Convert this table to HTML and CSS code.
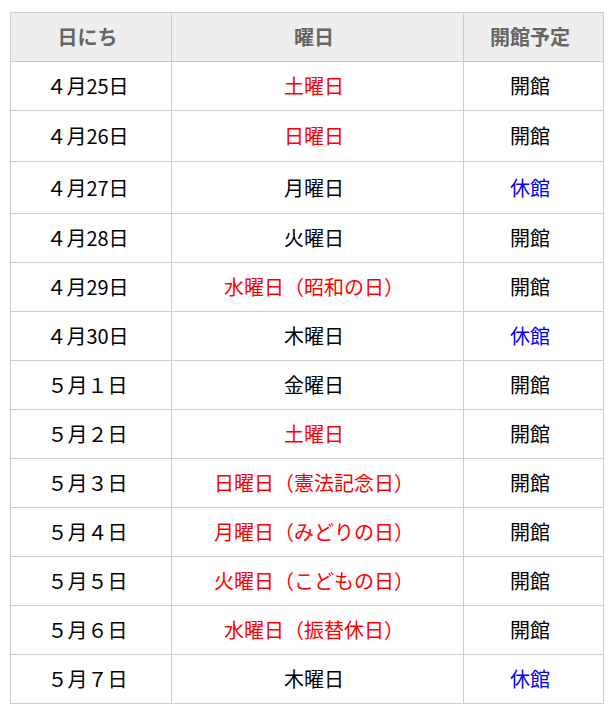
FILE: index.html
```
<!DOCTYPE html>
<html lang="ja">
<head>
<meta charset="utf-8">
<link rel="stylesheet" href="styles.css">
</head>
<body>
<table class="schedule">
  <colgroup>
    <col class="c-date">
    <col class="c-day">
    <col class="c-open">
  </colgroup>
  <thead>
    <tr><th>日にち</th><th>曜日</th><th>開館予定</th></tr>
  </thead>
  <tbody>
    <tr><td>４月25日</td><td class="red">土曜日</td><td>開館</td></tr>
    <tr class="h51"><td>４月26日</td><td class="red">日曜日</td><td>開館</td></tr>
    <tr class="h52"><td>４月27日</td><td>月曜日</td><td class="blue">休館</td></tr>
    <tr><td>４月28日</td><td>火曜日</td><td>開館</td></tr>
    <tr><td>４月29日</td><td class="red">水曜日（昭和の日）</td><td>開館</td></tr>
    <tr><td>４月30日</td><td>木曜日</td><td class="blue">休館</td></tr>
    <tr><td>５月１日</td><td>金曜日</td><td>開館</td></tr>
    <tr><td>５月２日</td><td class="red">土曜日</td><td>開館</td></tr>
    <tr><td>５月３日</td><td class="red">日曜日（憲法記念日）</td><td>開館</td></tr>
    <tr><td>５月４日</td><td class="red">月曜日（みどりの日）</td><td>開館</td></tr>
    <tr><td>５月５日</td><td class="red">火曜日（こどもの日）</td><td>開館</td></tr>
    <tr><td>５月６日</td><td class="red">水曜日（振替休日）</td><td>開館</td></tr>
    <tr><td>５月７日</td><td>木曜日</td><td class="blue">休館</td></tr>
  </tbody>
</table>
</body>
</html>
```
FILE: styles.css
```
html, body {
  margin: 0;
  padding: 0;
  background: #fff;
}
body {
  font-family: "Noto Sans CJK JP", "Noto Sans", sans-serif;
  font-size: 20px;
  color: #000;
}
.schedule {
  margin: 12px 0 0 10px;
  width: 593px;
  border-collapse: collapse;
  table-layout: fixed;
}
.c-date { width: 161px; }
.c-day { width: 292px; }
.c-open { width: 140px; }
.schedule th,
.schedule td {
  border: 1px solid #ccc;
  text-align: center;
  vertical-align: middle;
  padding: 0 7px 0 0;
  height: 48px;
  line-height: 1.1;
}
.schedule th {
  background: #eee;
  color: #666;
  font-weight: bold;
}
.schedule tr.h51 td { height: 50px; }
.schedule tr.h52 td { height: 51px; }
.red { color: #ff0000; }
.blue { color: #0000ff; }
```
